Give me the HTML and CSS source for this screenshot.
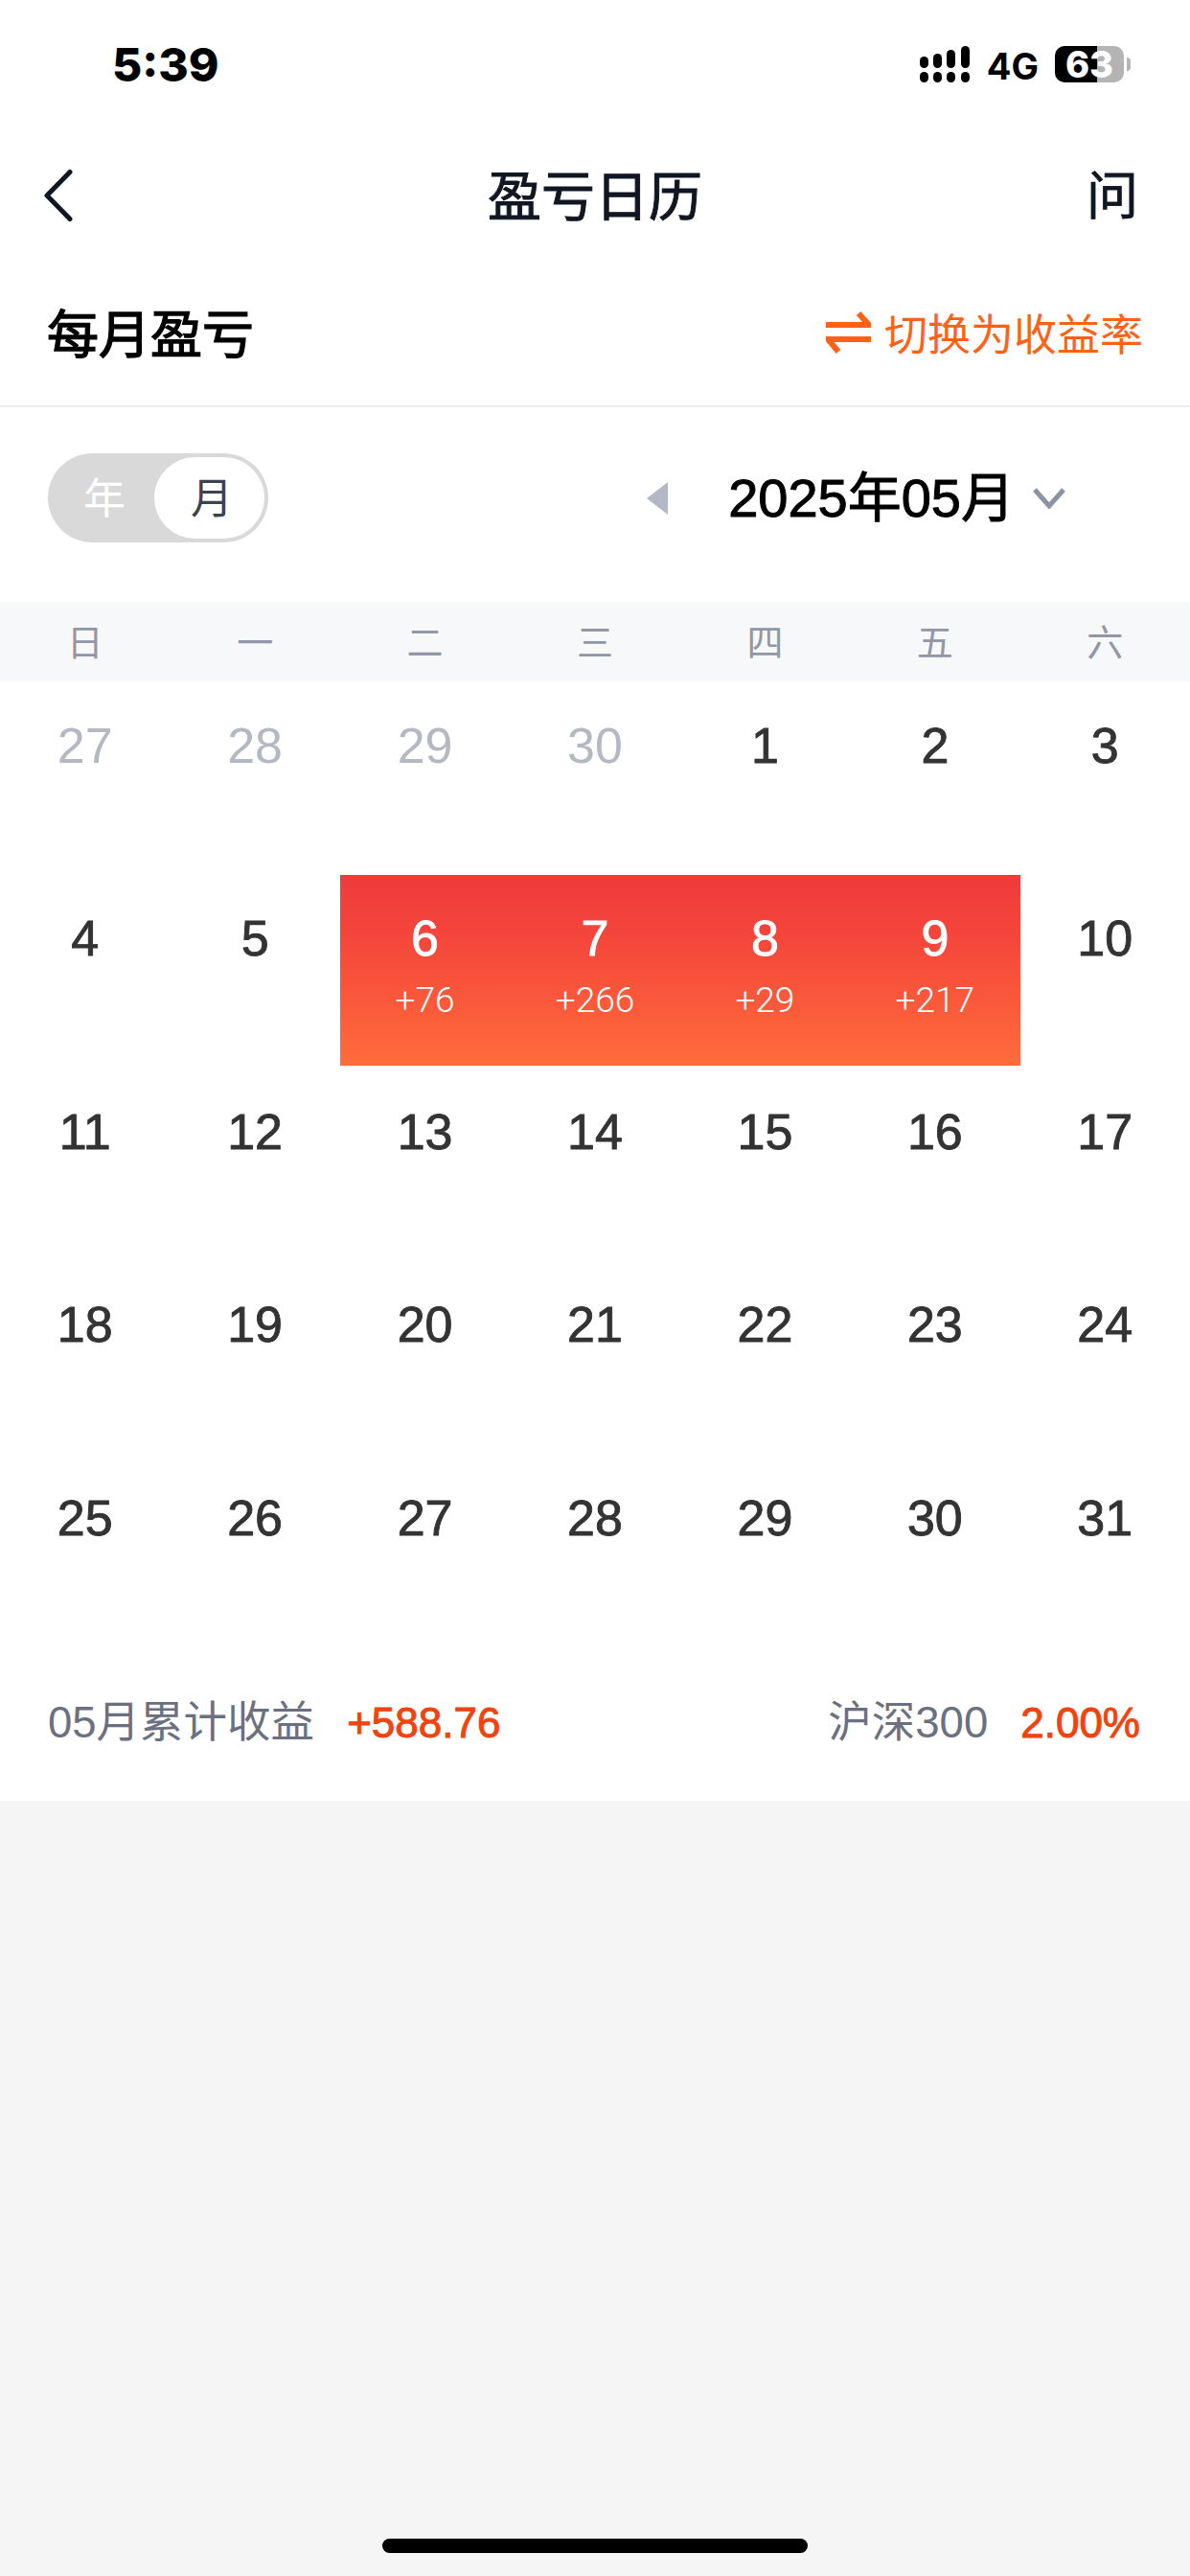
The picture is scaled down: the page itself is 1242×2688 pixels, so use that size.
FILE: index.html
```html
<!DOCTYPE html>
<html lang="zh-CN">
<head>
    <meta charset="UTF-8">
    <meta name="viewport" content="width=device-width, initial-scale=1.0">
    <title>盈亏日历</title>
    <link rel="stylesheet" href="styles.css">
</head>

<body>
    <div class="pagina">
        <section class="blanco">
            <div class="estado">
                <span class="hora">5:39</span>
                <div class="estado-der">
                    <svg class="senal" width="52" height="38" viewBox="0 0 52 38" fill="#000">
                        <rect x="0" y="11" width="9" height="12" rx="4.5"/>
                        <rect x="14" y="8" width="9" height="15" rx="4.5"/>
                        <rect x="28" y="4" width="9" height="19" rx="4.5"/>
                        <rect x="43" y="0" width="9" height="23" rx="4.5"/>
                        <rect x="0" y="27" width="9" height="11" rx="4.5"/>
                        <rect x="14" y="27" width="9" height="11" rx="4.5"/>
                        <rect x="28" y="27" width="9" height="11" rx="4.5"/>
                        <rect x="43" y="27" width="9" height="11" rx="4.5"/>
                    </svg>
                    <span class="red">4G</span>
                    <div class="bateria"><span>63</span></div>
                    <div class="bateria-punta"></div>
                </div>
            </div>

            <header class="barra">
                <svg class="atras" width="30" height="54" viewBox="0 0 30 54" fill="none" stroke="#111722" stroke-width="5" stroke-linecap="round" stroke-linejoin="round">
                    <path d="M27 2.500 L3 27 L27 51.500"/>
                </svg>
                <h1>盈亏日历</h1>
                <a href="#" class="pregunta">问</a>
            </header>

            <div class="seccion">
                <h2>每月盈亏</h2>
                <a href="#" class="cambiar">
                    <svg width="47" height="44" viewBox="0 0 47 44" fill="none" stroke="#ff6116" stroke-width="6">
                        <path d="M0 14 H45 L34 2"/>
                        <path d="M47 29 H2 L13 42"/>
                    </svg>
                    切换为收益率
                </a>
            </div>

            <div class="controles">
                <div class="interruptor">
                    <span class="op">年</span>
                    <span class="op activo">月</span>
                </div>
                <div class="fecha">
                    <svg class="previo" width="22" height="34" viewBox="0 0 22 34" fill="#b4b8c6">
                        <path d="M22 0 V34 L0 17 Z"/>
                    </svg>
                    <span class="mes">2025年05月</span>
                    <svg class="flecha" width="34" height="22" viewBox="0 0 34 22" fill="none" stroke="#8d93a5" stroke-width="5">
                        <path d="M2 2 L17 19 L32 2"/>
                    </svg>
                </div>
            </div>

            <div class="semana">
                <span>日</span><span>一</span><span>二</span><span>三</span><span>四</span><span>五</span><span>六</span>
            </div>

            <div class="dias">
                <div class="dia otro">27</div>
                <div class="dia otro">28</div>
                <div class="dia otro">29</div>
                <div class="dia otro">30</div>
                <div class="dia">1</div>
                <div class="dia">2</div>
                <div class="dia">3</div>
                <div class="dia">4</div>
                <div class="dia">5</div>
                <div class="rango">
                    <div class="dia">6<small>+76</small></div>
                    <div class="dia">7<small>+266</small></div>
                    <div class="dia">8<small>+29</small></div>
                    <div class="dia">9<small>+217</small></div>
                </div>
                <div class="dia">10</div>
                <div class="dia">11</div>
                <div class="dia">12</div>
                <div class="dia">13</div>
                <div class="dia">14</div>
                <div class="dia">15</div>
                <div class="dia">16</div>
                <div class="dia">17</div>
                <div class="dia">18</div>
                <div class="dia">19</div>
                <div class="dia">20</div>
                <div class="dia">21</div>
                <div class="dia">22</div>
                <div class="dia">23</div>
                <div class="dia">24</div>
                <div class="dia">25</div>
                <div class="dia">26</div>
                <div class="dia">27</div>
                <div class="dia">28</div>
                <div class="dia">29</div>
                <div class="dia">30</div>
                <div class="dia">31</div>
            </div>

            <div class="resumen">
                <div class="dato"><span>05月累计收益</span><b>+588.76</b></div>
                <div class="dato"><span>沪深300</span><b>2.00%</b></div>
            </div>
        </section>

        <div class="fondo">
            <div class="inicio"></div>
        </div>
    </div>
</body>
</html>
```

FILE: styles.css
```css
* {
    box-sizing: border-box;
}

body {
    margin: 0;
    padding: 0;
    font-family: "Liberation Sans", "Noto Sans CJK SC", sans-serif;
    color: #333;
}

a {
    text-decoration: none;
}

.pagina {
    width: 1242px;
    height: 2688px;
    display: flex;
    flex-direction: column;
    overflow: hidden;
    background-color: #f5f5f5;
}

.blanco {
    background-color: #fff;
}

/* barra de estado */
.estado {
    height: 136px;
    padding: 48px 62px 0 117px;
    display: flex;
    justify-content: space-between;
    align-items: flex-start;
}

.hora {
    font-family: Inter, sans-serif;
    font-size: 48px;
    font-weight: 800;
    line-height: 40px;
    color: #000;
}

.estado-der {
    display: flex;
    align-items: flex-start;
}

.red {
    margin-left: 18px;
    font-family: Inter, sans-serif;
    font-size: 38px;
    font-weight: 700;
    line-height: 42px;
    color: #000;
}

.bateria {
    width: 72px;
    height: 38px;
    margin-left: 17px;
    border-radius: 10px;
    background: linear-gradient(90deg, #000 61%, #b4b4b4 61%);
    text-align: center;
}

.bateria span {
    font-family: Inter, sans-serif;
    font-size: 38px;
    font-weight: 800;
    line-height: 38px;
    color: #fff;
}

.bateria-punta {
    width: 4px;
    height: 14px;
    margin: 12px 0 0 3px;
    border-radius: 0 4px 4px 0;
    background-color: #b4b4b4;
}

/* cabecera */
.barra {
    height: 136px;
    padding: 0 46px;
    display: grid;
    grid-template-columns: 1fr auto 1fr;
    align-items: center;
}

.barra h1 {
    margin: 0 0 8px;
    font-size: 56px;
    font-weight: 400;
    -webkit-text-stroke: 1px #111722;
    color: #111722;
}

.pregunta {
    margin: 0 8px 8px 0;
    justify-self: end;
    font-size: 54px;
    -webkit-text-stroke: 0.8px #111722;
    color: #111722;
}

.seccion {
    height: 153px;
    padding: 0 49px 4px 49px;
    display: flex;
    justify-content: space-between;
    align-items: center;
    border-bottom: 2px solid #eeeeee;
}

.seccion h2 {
    margin: 0;
    font-size: 54px;
    font-weight: 400;
    -webkit-text-stroke: 1.4px #000;
    color: #000;
}

.cambiar {
    display: flex;
    align-items: center;
    gap: 14px;
    padding-top: 2px;
    font-size: 45px;
    color: #ff6116;
}

/* selector de año y mes */
.controles {
    height: 203px;
    padding: 48px 130px 0 50px;
    display: flex;
    justify-content: space-between;
    align-items: flex-start;
}

.interruptor {
    width: 230px;
    height: 93px;
    padding: 4px;
    display: flex;
    border-radius: 47px;
    background-color: #d9d9d9;
}

.op {
    width: 107px;
    padding-left: 3px;
    font-size: 44px;
    line-height: 87px;
    text-align: center;
    color: #fff;
}

.activo {
    width: 115px;
    padding-left: 5px;
    border-radius: 43px;
    background-color: #fff;
    color: #3c4250;
}

.fecha {
    height: 93px;
    display: flex;
    align-items: center;
}

.mes {
    margin: 0 19px 10px 63px;
    font-size: 56px;
    -webkit-text-stroke: 1px #000;
    color: #000;
}

/* calendario */
.semana {
    height: 83px;
    padding-bottom: 5px;
    display: grid;
    grid-template-columns: repeat(7, 1fr);
    align-items: center;
    background-color: #f6f8fa;
    font-size: 38px;
    text-align: center;
    color: #9297a8;
}

.dias {
    display: grid;
    grid-template-columns: repeat(7, 1fr);
    grid-auto-rows: 201.4px;
}

.dia {
    padding-top: 35px;
    display: flex;
    flex-direction: column;
    align-items: center;
    font-size: 52px;
    -webkit-text-stroke: 0.9px currentColor;
    line-height: 64px;
    color: #333;
}

.dia small {
    margin-top: 11px;
    font-family: Roboto, sans-serif;
    font-size: 37px;
    font-weight: 300;
    -webkit-text-stroke: 0;
    line-height: 44px;
}

.otro {
    -webkit-text-stroke: 0;
    color: #b4b8c3;
}

.rango {
    grid-column: span 4;
    height: 199px;
    margin-top: 1px;
    display: grid;
    grid-template-columns: repeat(4, 1fr);
    background: linear-gradient(180deg, #f03a3c 0%, #f4453b 30%, #ff6b3b 100%);
}

.rango .dia {
    padding-top: 34px;
    color: #fff;
}

.resumen {
    height: 161px;
    padding: 0 52px 11px 50px;
    display: flex;
    justify-content: space-between;
    align-items: center;
}

.dato {
    display: flex;
    align-items: baseline;
    gap: 34px;
    font-size: 45.5px;
    color: #6b7080;
}

.dato b {
    font-size: 44px;
    font-weight: 400;
    -webkit-text-stroke: 1px #f0440f;
    color: #f0440f;
}

.fondo {
    flex: 1;
    display: flex;
    justify-content: center;
    align-items: flex-end;
    padding-bottom: 24px;
}

.inicio {
    width: 444px;
    height: 15px;
    border-radius: 8px;
    background-color: #000;
}
```
